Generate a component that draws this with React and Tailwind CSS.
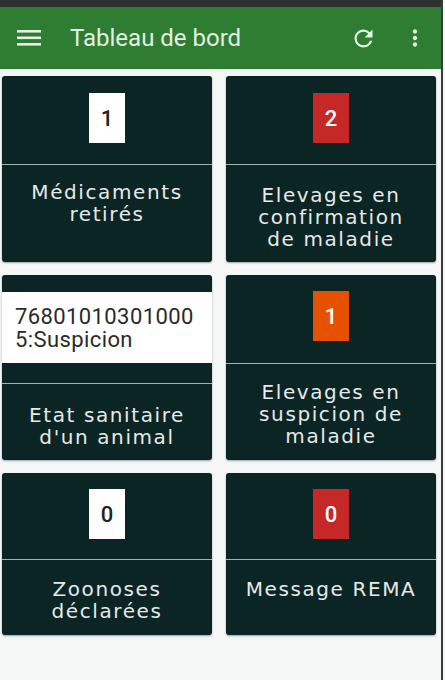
import React from "react";

const labelFont = { fontFamily: '"DejaVu Sans", sans-serif' };

function MenuIcon() {
  return (
    <svg width="26" height="20" viewBox="0 0 26 20" fill="#e3f1e3">
      <rect x="1" y="2" width="24" height="2.6" />
      <rect x="1" y="8.5" width="24" height="2.6" />
      <rect x="1" y="15" width="24" height="2.6" />
    </svg>
  );
}

function RefreshIcon() {
  return (
    <svg width="27" height="27" viewBox="0 0 24 24" fill="#e3f1e3">
      <path d="M17.65 6.35A7.958 7.958 0 0012 4c-4.42 0-7.99 3.58-7.99 8s3.57 8 7.99 8c3.73 0 6.84-2.55 7.73-6h-2.08A5.99 5.99 0 0112 18c-3.31 0-6-2.69-6-6s2.69-6 6-6c1.66 0 3.140.69 4.22 1.78L13 11h7V4l-2.35 2.350z" />
    </svg>
  );
}

function MoreIcon() {
  return (
    <svg width="26" height="26" viewBox="0 0 24 24" fill="#e3f1e3">
      <path d="M12 8c1.1 0 2-.9 2-2s-.9-2-2-2-2 .9-2 2 .9 2 2 2zm0 2c-1.1 0-2 .9-2 2s.9 2 2 2 2-.9 2-2-.9-2-2-2zm0 6c-1.1 0-2 .9-2 2s.9 2 2 2 2-.9 2-2-.9-2-2-2z" />
    </svg>
  );
}

const badgeTone = {
  white: "bg-white text-[#222]",
  red: "bg-[#c62828] text-white",
  orange: "bg-[#e65100] text-white",
};

function Badge({ value, tone }) {
  return (
    <div
      className={`w-[36px] h-[50px] flex items-center justify-center text-[22px] font-medium ${badgeTone[tone]}`}
      style={{ fontFamily: "Roboto, sans-serif" }}
    >
      {value}
    </div>
  );
}

function Card({ top, topClass, labelClass, children }) {
  return (
    <div className="flex flex-col rounded-[3px] bg-[#0b2424] shadow-[0_1px_2px_rgba(0,0,0,0.35)] overflow-hidden">
      <div className={topClass}>{top}</div>
      <div className="h-px bg-[#a3b0b0]" />
      <div
        className={`flex-1 text-center text-[20px] leading-[22px] tracking-[0.08em] text-[#e6eae8] ${labelClass}`}
        style={labelFont}
      >
        {children}
      </div>
    </div>
  );
}

export default function App() {
  return (
    <div className="w-[445px] h-[680px] flex bg-[#f5f6f6]">
      <div className="w-[441px] flex flex-col">
        <div className="h-[7px] bg-[#2f2f2f]" />
        <div
          className="h-[62px] bg-[#2e7d32] flex items-center pl-[16px]"
          style={{ fontFamily: "Roboto, sans-serif" }}
        >
          <MenuIcon />
          <div className="ml-[28px] text-[24px] text-[#e3f1e3]">Tableau de bord</div>
          <div className="ml-auto mr-[25px]">
            <RefreshIcon />
          </div>
          <div className="mr-[13px]">
            <MoreIcon />
          </div>
        </div>

        <div className="grid grid-cols-2 gap-x-[14px] gap-y-[13px] pl-[2px] pr-[5px] pt-[7px]">
          <div className="h-[186px] grid">
            <Card
              top={<Badge value="1" tone="white" />}
              topClass="h-[88px] flex justify-center pt-[17px]"
              labelClass="pt-[16px]"
            >
              Médicaments
              <br />
              retirés
            </Card>
          </div>
          <div className="h-[186px] grid">
            <Card
              top={<Badge value="2" tone="red" />}
              topClass="h-[88px] flex justify-center pt-[17px]"
              labelClass="pt-[19px]"
            >
              Elevages en
              <br />
              confirmation
              <br />
              de maladie
            </Card>
          </div>

          <div className="h-[185px] grid">
            <Card
              top={
                <div className="pt-[17px]">
                  <div
                    className="h-[71px] bg-white flex flex-col justify-center pl-[13px] text-[22px] leading-[23px] tracking-[0.4px] text-[#2a2a2a]"
                    style={{ fontFamily: "Roboto, sans-serif" }}
                  >
                    <div>76801010301000</div>
                    <div>5:Suspicion</div>
                  </div>
                </div>
              }
              topClass="h-[108px]"
              labelClass="pt-[20px]"
            >
              Etat sanitaire
              <br />
              d'un animal
            </Card>
          </div>
          <div className="h-[185px] grid">
            <Card
              top={<Badge value="1" tone="orange" />}
              topClass="h-[88px] flex justify-center pt-[16px]"
              labelClass="pt-[17px]"
            >
              Elevages en
              <br />
              suspicion de
              <br />
              maladie
            </Card>
          </div>

          <div className="h-[162px] grid">
            <Card
              top={<Badge value="0" tone="white" />}
              topClass="h-[86px] flex justify-center pt-[16px]"
              labelClass="pt-[18px]"
            >
              Zoonoses
              <br />
              déclarées
            </Card>
          </div>
          <div className="h-[162px] grid">
            <Card
              top={<Badge value="0" tone="red" />}
              topClass="h-[86px] flex justify-center pt-[16px]"
              labelClass="pt-[18px]"
            >
              Message REMA
            </Card>
          </div>
        </div>
      </div>
      <div className="w-[2px] bg-[#3a3a3a]" />
      <div className="w-[2px] bg-[#f5f6f6]" />
    </div>
  );
}
